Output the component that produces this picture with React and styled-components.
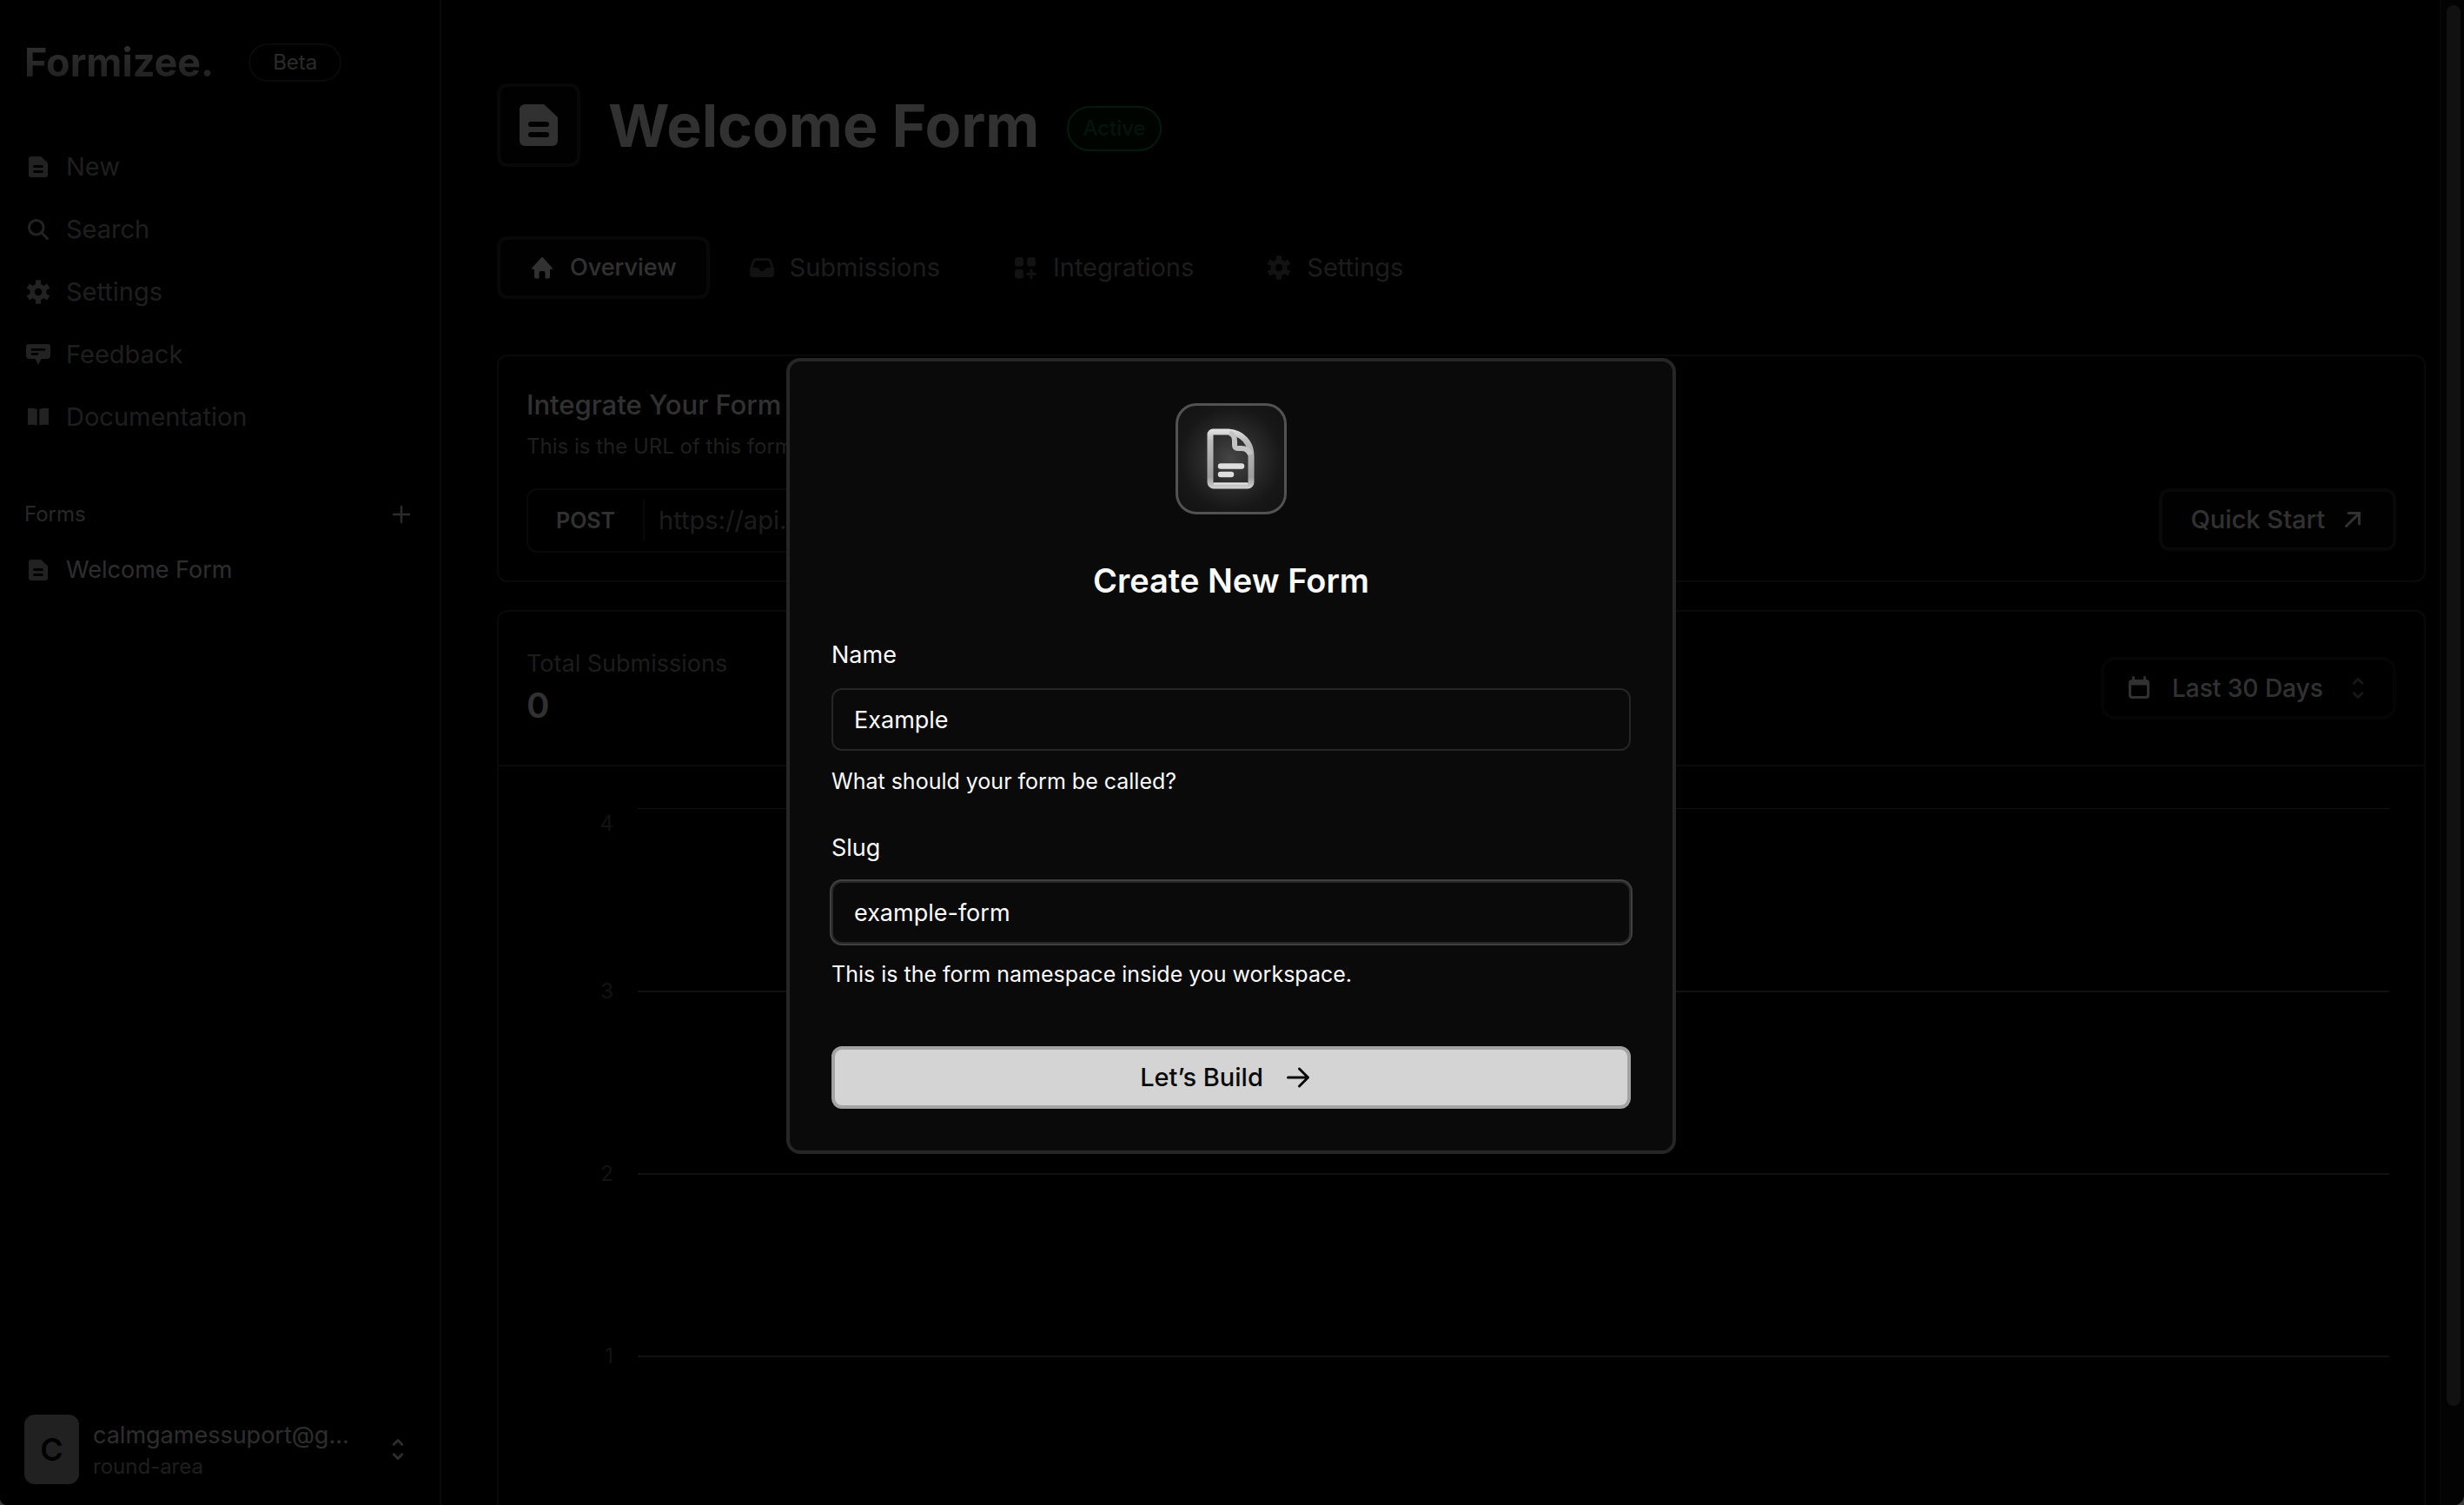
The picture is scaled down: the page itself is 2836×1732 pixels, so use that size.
import React from "react";
import styled, { createGlobalStyle, css } from "styled-components";

const GlobalStyle = createGlobalStyle`
  *, *::before, *::after { box-sizing: border-box; }
  html { background: #3a3a3a; }
  body { margin: 0; font-family: Inter, "Liberation Sans", sans-serif; }
  button, input, select { font: inherit; color: inherit; }
  h1, h2, p { margin: 0; }
`;

const Window = styled.div`
  position: relative;
  display: flex;
  height: 100vh;
  overflow: hidden;
  border-radius: 0 0 12px 8px;
  background: #000;
  color: #f2f2f2;
  font-size: 27px;
  line-height: 40px;
`;

/* ---------- icons ---------- */

const Svg = styled.svg`
  flex: none;
  width: ${(p) => p.$size || 28}px;
  height: ${(p) => p.$size || 28}px;
  display: block;
`;

const Icon = ({ size, children }) => (
  <Svg $size={size} viewBox="0 0 28 28" fill="none" aria-hidden="true">
    {children}
  </Svg>
);

const FileIcon = ({ size }) => (
  <Icon size={size}>
    <path
      fill="currentColor"
      fillRule="evenodd"
      d="M6 2h11l8 7.500V23a3 3 0 0 1-3 3H6a3 3 0 0 1-3-3V5a3 3 0 0 1 3-3ZM9.500 12a1.500 1.500 0 0 0 0 3h9a1.500 1.500 0 0 0 0-3ZM9.500 18a1.500 1.500 0 0 0 0 3h9a1.500 1.500 0 0 0 0-3Z"
    />
  </Icon>
);

const SearchIcon = () => (
  <Icon>
    <g stroke="currentColor" strokeWidth="3" strokeLinecap="round">
      <circle cx="11.8" cy="11.8" r="8.3" />
      <path d="m18 18 6.500 6.500" />
    </g>
  </Icon>
);

const GearIcon = () => (
  <Icon>
    <circle cx="14" cy="14" r="6.900" stroke="currentColor" strokeWidth="5.400" />
    <g stroke="currentColor" strokeWidth="6">
      {[0, 60, 120, 180, 240, 300].map((a) => (
        <path key={a} d="M14 6V0.400" transform={`rotate(${a} 14 14)`} />
      ))}
    </g>
  </Icon>
);

const FeedbackIcon = () => (
  <Icon>
    <path
      fill="currentColor"
      fillRule="evenodd"
      d="M3 2h22a3 3 0 0 1 3 3v10a4 4 0 0 1-4 4h-6.500L14 26l-3.500-7H4a4 4 0 0 1-4-4V5a3 3 0 0 1 3-3ZM7 7a1.400 1.400 0 0 0 0 2.800h14A1.400 1.400 0 0 0 21 7ZM7 12a1.400 1.400 0 0 0 0 2.800h6A1.400 1.400 0 0 0 13 12Z"
    />
  </Icon>
);

const BookIcon = () => (
  <Icon>
    <path fill="currentColor" d="M2 4c4-.6 8-.4 10.700 1v18.500C9.500 22.600 6 22.500 2 23ZM26 4c-4-.6-8-.4-10.700 1v18.500c3.200-.9 6.700-1 10.700-.5Z" />
  </Icon>
);

const HomeIcon = () => (
  <Icon>
    <path
      fill="currentColor"
      d="M14 1.500 25.500 14c.8.900.3 2-.9 2H23v8.500a2 2 0 0 1-2 2h-3.500V20a2 2 0 0 0-2-2h-3a2 2 0 0 0-2 2v6.500H7a2 2 0 0 1-2-2V16H3.400c-1.200 0-1.700-1.100-.9-2Z"
    />
  </Icon>
);

const InboxIcon = () => (
  <Icon>
    <path
      fill="currentColor"
      fillRule="evenodd"
      d="M7 3h14a4 4 0 0 1 3.700 2.500L28 15v6a4 4 0 0 1-4 4H4a4 4 0 0 1-4-4v-6l3.300-9.500A4 4 0 0 1 7 3Zm.500 3a2 2 0 0 0-1.800 1.300L3.300 14H8c1.200 0 1.800.6 2.400 1.600.8 1.400 1.800 2.400 3.600 2.400s2.800-1 3.600-2.400c.6-1 1.200-1.600 2.400-1.600h4.700l-2.400-6.700A2 2 0 0 0 20.500 6Z"
    />
  </Icon>
);

const AppsIcon = () => (
  <Icon>
    <rect x="2" y="2" width="10" height="10.500" rx="3" fill="currentColor" />
    <rect x="16" y="2" width="10" height="10.500" rx="3" fill="currentColor" />
    <rect x="2" y="16" width="10" height="10.500" rx="3" fill="currentColor" />
    <path d="M21 17v8.500M16.700 21.200h8.600" stroke="currentColor" strokeWidth="3" strokeLinecap="round" />
  </Icon>
);

const PlusIcon = () => (
  <Icon>
    <path d="M14 5v18M5 14h18" stroke="currentColor" strokeWidth="2.400" strokeLinecap="round" />
  </Icon>
);

const UpDownIcon = () => (
  <Icon>
    <path
      d="m9.200 8.200 4.800-4.700 4.800 4.700M9.200 19.800l4.800 4.700 4.800-4.700"
      stroke="currentColor"
      strokeWidth="3"
      strokeLinecap="round"
      strokeLinejoin="round"
    />
  </Icon>
);

const CalendarIcon = () => (
  <Icon>
    <path
      fill="currentColor"
      fillRule="evenodd"
      d="M6 1.500a1.500 1.500 0 0 1 3 0V4h10V1.500a1.500 1.500 0 0 1 3 0V4a4 4 0 0 1 4 4v14a4 4 0 0 1-4 4H6a4 4 0 0 1-4-4V8a4 4 0 0 1 4-4ZM5 10.500V21a2 2 0 0 0 2 2h14a2 2 0 0 0 2-2V10.500Z"
    />
  </Icon>
);

const NorthEastIcon = () => (
  <Icon>
    <path d="M6.500 21.500 20.800 7.200M9 6.600h12.400V19" stroke="currentColor" strokeWidth="3" strokeLinecap="round" />
  </Icon>
);

const ArrowIcon = () => (
  <Icon>
    <path
      d="M2.500 14h23M15.500 4l10 10-10 10"
      stroke="currentColor"
      strokeWidth="3"
      strokeLinecap="round"
      strokeLinejoin="round"
    />
  </Icon>
);

/* ---------- sidebar ---------- */

const Sidebar = styled.aside`
  flex: none;
  display: flex;
  flex-direction: column;
  width: 508px;
  padding: 50px 34px 24px 28px;
  border-right: 2px solid #323232;
`;

const Brand = styled.div`
  display: flex;
  align-items: center;
  height: 44px;
  gap: 40px;
`;

const Logo = styled.span`
  font-size: 45px;
  line-height: 56px;
  font-weight: 700;
  color: transparent;
  background: linear-gradient(#f0f0f0, #9a9a9a);
  background-clip: text;
`;

const Pill = styled.span`
  display: flex;
  align-items: center;
  height: 44px;
  padding: 0 26px;
  border: 2px solid #323232;
  border-radius: 26px;
  font-size: 24px;
  color: #d0d0d0;
  ${(p) =>
    p.$active &&
    css`
      height: 52px;
      margin-top: 8px;
      padding: 0 16px;
      font-weight: 500;
      border-color: #14823a;
      background: #041408;
      color: #126a32;
    `}
`;

const Nav = styled.nav`
  display: flex;
  flex-direction: column;
  gap: 32px;
  margin-top: 78px;
  font-size: 29px;
`;

const NavLink = styled.a`
  display: flex;
  align-items: center;
  gap: 18px;
  height: 40px;
  padding-left: 2px;
  color: ${(p) => (p.$bright ? "#e0e0e0" : "#969696")};
  text-decoration: none;

  svg { color: #a8a8a8; }
`;

const SectionHead = styled.div`
  display: flex;
  align-items: center;
  justify-content: space-between;
  height: 40px;
  margin: 72px -4px 24px 0;
  font-size: 24px;
  color: #c4c4c4;
`;

const IconButton = styled.button`
  display: flex;
  padding: 0;
  border: 0;
  background: none;
  color: #dcdcdc;
`;

const Account = styled.button`
  display: flex;
  align-items: center;
  gap: 16px;
  margin-top: auto;
  padding: 0;
  border: 0;
  background: none;
  text-align: left;
  color: #e0e0e0;

  > svg { margin-left: auto; }
`;

const Avatar = styled.span`
  display: grid;
  place-items: center;
  width: 63px;
  height: 80px;
  border-radius: 12px;
  background: #a6a6a6;
  color: #000;
  font-size: 36px;
  font-weight: 600;
`;

const AccountText = styled.span`
  display: flex;
  flex-direction: column;
`;

const Workspace = styled.span`
  font-size: 24px;
  line-height: 32px;
  color: #969696;
`;

/* ---------- main ---------- */

const Main = styled.main`
  flex: 1;
  min-width: 0;
  display: flex;
  flex-direction: column;
  padding: 96px 16px 0 64px;
`;

const PageHead = styled.header`
  display: flex;
  align-items: center;
  gap: 32px;
  height: 96px;
`;

const PageIcon = styled.span`
  display: grid;
  place-items: center;
  width: 96px;
  height: 96px;
  border: 4px solid #282828;
  border-radius: 12px;
  background: #080808;
`;

const PageTitle = styled.h1`
  font-size: 68px;
  line-height: 80px;
  font-weight: 700;
`;

const Tabs = styled.div`
  display: flex;
  gap: 8px;
  margin: 80px 0 64px;
`;

const Tab = styled.button`
  display: flex;
  align-items: center;
  gap: 18px;
  height: 72px;
  padding: 0 34px;
  border: 4px solid ${(p) => (p.$active ? "#282828" : "transparent")};
  border-radius: 12px;
  background: ${(p) => (p.$active ? "#080808" : "transparent")};
  color: ${(p) => (p.$active ? "#f2f2f2" : "#8c8c8c")};
  font-size: ${(p) => (p.$active ? 27 : 29)}px;
  font-weight: ${(p) => (p.$active ? 500 : 400)};

  svg { color: ${(p) => (p.$active ? "#f2f2f2" : "#5a5a5a")}; }
`;

const Card = styled.section`
  flex: none;
  border: 2px solid #303030;
  border-radius: 12px;
`;

const IntegrateCard = styled(Card)`
  padding: 36px 32px 32px;
  margin-bottom: 32px;
`;

const CardTitle = styled.h2`
  font-size: 31px;
  line-height: 40px;
  font-weight: 500;
`;

const CardHint = styled.p`
  margin: 12px 0 32px;
  font-size: 24px;
  line-height: 32px;
  color: #969696;
`;

const CardRow = styled.div`
  display: flex;
  align-items: flex-start;
  justify-content: space-between;
`;

const Endpoint = styled.div`
  display: flex;
  align-items: center;
  width: 45%;
  height: 74px;
  padding-left: 32px;
  border: 2px solid #303030;
  border-radius: 12px;
`;

const Method = styled.span`
  padding-right: 32px;
  border-right: 2px solid #303030;
  font-size: 25px;
  line-height: 48px;
  font-weight: 600;
`;

const EndpointInput = styled.input`
  flex: 1;
  min-width: 0;
  padding: 0 16px;
  border: 0;
  outline: 0;
  background: none;
  color: #8c8c8c;
  font-size: 29px;
`;

const OutlineLink = styled.a`
  display: flex;
  align-items: center;
  gap: 18px;
  height: 72px;
  padding: 0 32px;
  border: 4px solid #282828;
  border-radius: 12px;
  background: #080808;
  color: #f2f2f2;
  font-size: 29px;
  font-weight: 500;
  text-decoration: none;
`;

const ChartCard = styled(Card)`
  border-bottom: 0;
  border-radius: 12px 12px 0 0;
`;

const ChartHead = styled.div`
  display: flex;
  align-items: center;
  justify-content: space-between;
  height: 178px;
  padding: 0 32px;
  border-bottom: 2px solid #303030;
`;

const StatLabel = styled.p`
  color: #8c8c8c;
`;

const StatValue = styled.p`
  font-size: 40px;
  line-height: 56px;
  font-weight: 600;
`;

const Range = styled.label`
  display: flex;
  align-items: center;
  gap: 24px;
  height: 72px;
  padding: 0 26px;
  border: 4px solid #1c1c1c;
  border-radius: 16px;

  svg:last-child { color: #707070; }
`;

const RangeSelect = styled.select`
  appearance: none;
  min-width: 176px;
  padding: 0;
  border: 0;
  outline: 0;
  background: none;
  font-size: 28px;
  font-weight: 500;
`;

const Chart = styled.div`
  padding: 48px 40px 0 0;
`;

const ChartRow = styled.div`
  display: flex;
  height: 210px;
`;

const Tick = styled.span`
  width: 160px;
  margin-top: ${(p) => (p.$first ? 2 : -15)}px;
  padding-right: 28px;
  text-align: right;
  font-size: 24px;
  line-height: 32px;
  color: #5a5a5a;
`;

const GridLine = styled.div`
  flex: 1;
  border-top: ${(p) => (p.$first ? 1 : 2)}px solid #585858;
`;

const ScrollTrack = styled.div`
  flex: none;
  width: 28px;
  padding: 6px 4px 114px 6px;
  border-left: 2px solid #202020;
  background: #101010;
`;

const ScrollThumb = styled.div`
  width: 16px;
  height: 100%;
  border-radius: 8px;
  background: #585858;
`;

/* ---------- dialog ---------- */

const Overlay = styled.div`
  position: absolute;
  inset: 0;
  display: flex;
  align-items: center;
  justify-content: center;
  padding: 8px 2px 0 0;
  background: rgba(0, 0, 0, 0.8);
`;

const Dialog = styled.form`
  display: flex;
  flex-direction: column;
  width: 1024px;
  max-width: 90%;
  padding: 48px;
  border: 4px solid #262626;
  border-radius: 16px;
  background: #0a0a0a;
  color: #fafafa;
`;

const Badge = styled.div`
  display: grid;
  place-items: center;
  align-self: center;
  width: 128px;
  height: 128px;
  border: 3px solid #525252;
  border-radius: 24px;
  background: radial-gradient(circle, #454545 0%, #2b2b2b 36%, #171717 68%, #121212 100%);
`;

const DialogTitle = styled.h2`
  margin: 52px 0 42px;
  text-align: center;
  font-size: 38px;
  line-height: 48px;
  font-weight: 600;
`;

const Field = styled.div`
  display: flex;
  flex-direction: column;
  margin-bottom: ${(p) => (p.$last ? 65 : 39)}px;
`;

const FieldInput = styled.input`
  height: 72px;
  margin: 18px 0 17px;
  padding: 0 24px;
  border: 2px solid #262626;
  border-radius: 12px;
  outline: 0;
  background: #0a0a0a;
  ${(p) => p.$focused && css`box-shadow: 0 0 0 2px #404040;`}
`;

const Hint = styled.p`
  font-size: 25px;
  line-height: 36px;
`;

const Submit = styled.button`
  display: flex;
  align-items: center;
  justify-content: center;
  gap: 26px;
  height: 72px;
  padding: 0 14px 0 0;
  border: 4px solid #a3a3a3;
  border-radius: 12px;
  background: #d4d4d4;
  color: #0a0a0a;
  font-size: 29px;
  font-weight: 500;
`;

const DocumentBadge = () => (
  <Badge>
    <svg width="56" height="70" viewBox="0 0 56 70" fill="none" aria-hidden="true">
      <defs>
        <linearGradient id="metal" x1="0" y1="0" x2="0" y2="70" gradientUnits="userSpaceOnUse">
          <stop offset="0" stopColor="#e6e6e6" />
          <stop offset="0.2" stopColor="#bdbdbd" />
          <stop offset="0.8" stopColor="#9c9c9c" />
          <stop offset="1" stopColor="#d6d6d6" />
        </linearGradient>
      </defs>
      <path
        d="M7 4h18C41 5 51 17 51 32v30a4 4 0 0 1-4 4H8a4 4 0 0 1-4-4V7a3 3 0 0 1 3-3Z"
        stroke="url(#metal)"
        strokeWidth="7"
        strokeLinejoin="round"
      />
      <path d="M26 5c5 2 6 5 6 10v4c0 3 1 4 4 4h4c5 0 8 2 10 7" stroke="#c4c4c4" strokeWidth="6" />
      <path d="M16 43.500h24M16 53h12" stroke="#dedede" strokeWidth="6.500" strokeLinecap="round" />
      <path d="M8 63.500h39" stroke="#e6e6e6" strokeWidth="2" />
    </svg>
  </Badge>
);

const NAV = [
  ["New", FileIcon],
  ["Search", SearchIcon],
  ["Settings", GearIcon],
  ["Feedback", FeedbackIcon],
  ["Documentation", BookIcon],
];

const TABS = [
  ["Overview", HomeIcon],
  ["Submissions", InboxIcon],
  ["Integrations", AppsIcon],
  ["Settings", GearIcon],
];

export default function App() {
  return (
    <Window>
      <GlobalStyle />
      <Sidebar>
        <Brand>
          <Logo>Formizee.</Logo>
          <Pill>Beta</Pill>
        </Brand>
        <Nav>
          {NAV.map(([label, Glyph]) => (
            <NavLink href="#" key={label}>
              <Glyph />
              {label}
            </NavLink>
          ))}
        </Nav>
        <SectionHead>
          Forms
          <IconButton type="button" aria-label="Add form">
            <PlusIcon />
          </IconButton>
        </SectionHead>
        <NavLink href="#" $bright>
          <FileIcon />
          Welcome Form
        </NavLink>
        <Account type="button">
          <Avatar>C</Avatar>
          <AccountText>
            calmgamessuport@g...
            <Workspace>round-area</Workspace>
          </AccountText>
          <UpDownIcon />
        </Account>
      </Sidebar>

      <Main>
        <PageHead>
          <PageIcon>
            <FileIcon size={56} />
          </PageIcon>
          <PageTitle>Welcome Form</PageTitle>
          <Pill $active>Active</Pill>
        </PageHead>

        <Tabs role="tablist">
          {TABS.map(([label, Glyph], i) => (
            <Tab type="button" role="tab" aria-selected={i === 0} $active={i === 0} key={label}>
              <Glyph />
              {label}
            </Tab>
          ))}
        </Tabs>

        <IntegrateCard>
          <CardTitle>Integrate Your Form</CardTitle>
          <CardHint>This is the URL of this form</CardHint>
          <CardRow>
            <Endpoint>
              <Method>POST</Method>
              <EndpointInput aria-label="Form URL" readOnly value="https://api." />
            </Endpoint>
            <OutlineLink href="#">
              Quick Start
              <NorthEastIcon />
            </OutlineLink>
          </CardRow>
        </IntegrateCard>

        <ChartCard>
          <ChartHead>
            <div>
              <StatLabel>Total Submissions</StatLabel>
              <StatValue>0</StatValue>
            </div>
            <Range>
              <CalendarIcon />
              <RangeSelect aria-label="Date range" defaultValue="30">
                <option value="30">Last 30 Days</option>
              </RangeSelect>
              <UpDownIcon />
            </Range>
          </ChartHead>
          <Chart>
            {[4, 3, 2, 1].map((n) => (
              <ChartRow key={n}>
                <Tick $first={n === 4}>{n}</Tick>
                <GridLine $first={n === 4} />
              </ChartRow>
            ))}
          </Chart>
        </ChartCard>
      </Main>

      <ScrollTrack>
        <ScrollThumb />
      </ScrollTrack>

      <Overlay>
        <Dialog role="dialog" aria-modal="true" aria-labelledby="dialog-title" onSubmit={(e) => e.preventDefault()}>
          <DocumentBadge />
          <DialogTitle id="dialog-title">Create New Form</DialogTitle>
          <Field>
            <label htmlFor="name">Name</label>
            <FieldInput id="name" defaultValue="Example" />
            <Hint>What should your form be called?</Hint>
          </Field>
          <Field $last>
            <label htmlFor="slug">Slug</label>
            <FieldInput id="slug" defaultValue="example-form" $focused />
            <Hint>This is the form namespace inside you workspace.</Hint>
          </Field>
          <Submit type="submit">
            Let’s Build
            <ArrowIcon />
          </Submit>
        </Dialog>
      </Overlay>
    </Window>
  );
}
